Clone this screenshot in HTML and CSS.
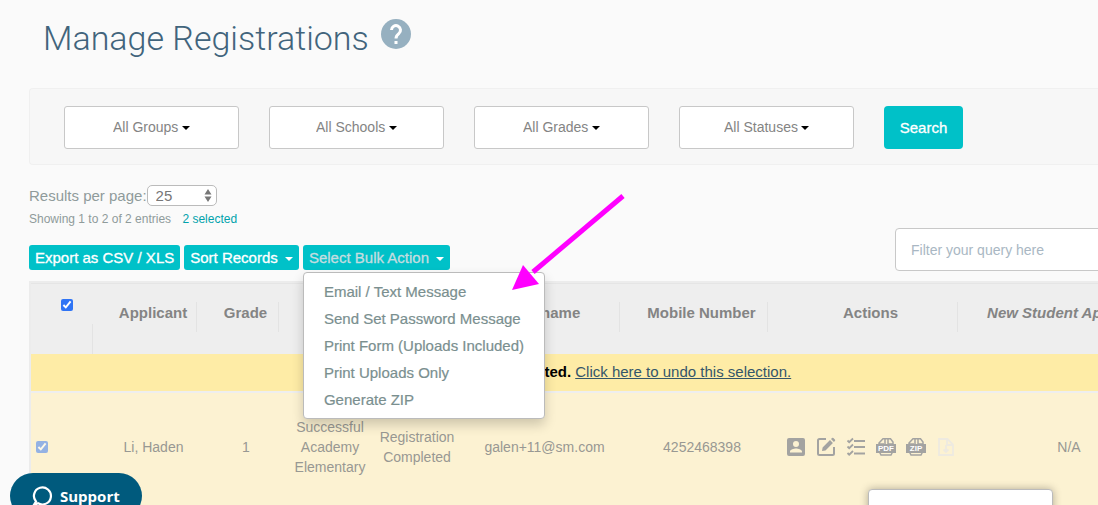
FILE: index.html
```
<!DOCTYPE html>
<html lang="en">
<head>
  <meta charset="UTF-8">
  <meta name="viewport" content="width=device-width, initial-scale=1">
  <title>Manage Registrations</title>
  <link rel="stylesheet" href="styles.css">
</head>
<body>

  <main class="page">
    <header class="title">
      <h1>Manage Registrations</h1>
      <a href="#" class="help" aria-label="Help">
        <svg width="30" height="30" viewBox="0 0 30 30">
          <circle cx="15" cy="15" r="15" fill="#96b0c0"/>
          <path d="M10.500 11a4.500 4.500 0 1 1 7.300 3.600c-1.900 1.500-2.800 2.400-2.800 5" fill="none" stroke="#fff" stroke-width="3"/>
          <rect x="13.500" y="22" width="3" height="3" fill="#fff"/>
        </svg>
      </a>
    </header>

    <form class="filters">
      <div class="filter">
        <select aria-label="Groups"><option>All Groups</option></select>
        <span class="caret"></span>
      </div>
      <div class="filter">
        <select aria-label="Schools"><option>All Schools</option></select>
        <span class="caret"></span>
      </div>
      <div class="filter">
        <select aria-label="Grades"><option>All Grades</option></select>
        <span class="caret"></span>
      </div>
      <div class="filter">
        <select aria-label="Statuses"><option>All Statuses</option></select>
        <span class="caret"></span>
      </div>
      <button type="button" class="search">Search</button>
    </form>

    <div class="per-page">
      <label for="perPage">Results per page:</label>
      <div class="stepper">
        <select id="perPage"><option>25</option></select>
        <svg width="8" height="13" viewBox="0 0 8 13"><path d="M4 0L7.500 5.500H.5zM4 13L.5 7.500H7.500z" fill="#777"/></svg>
      </div>
    </div>
    <p class="summary">Showing 1 to 2 of 2 entries <a href="#">2 selected</a></p>

    <div class="toolbar">
      <button type="button" class="btn">Export as CSV / XLS</button>
      <button type="button" class="btn">Sort Records <span class="caret"></span></button>
      <div class="dropdown">
        <button type="button" class="btn open" aria-haspopup="true" aria-expanded="true">Select Bulk Action <span class="caret"></span></button>
        <ul class="menu">
          <li><a href="#">Email / Text Message</a></li>
          <li><a href="#">Send Set Password Message</a></li>
          <li><a href="#">Print Form (Uploads Included)</a></li>
          <li><a href="#">Print Uploads Only</a></li>
          <li><a href="#">Generate ZIP</a></li>
        </ul>
      </div>
      <input type="text" class="query" placeholder="Filter your query here" aria-label="Filter your query here">
    </div>

    <div class="table-wrap">
      <table>
        <colgroup>
          <col class="c-check"><col class="c-name"><col class="c-grade"><col class="c-school"><col class="c-status">
          <col class="c-user"><col class="c-mobile"><col class="c-actions"><col class="c-new">
        </colgroup>
        <thead>
          <tr>
            <th class="check"><div><input type="checkbox" checked aria-label="Select all"></div></th>
            <th><div>Applicant</div></th>
            <th><div>Grade</div></th>
            <th aria-label="School"><div></div></th>
            <th aria-label="Status"><div></div></th>
            <th><div>Username</div></th>
            <th><div>Mobile Number</div></th>
            <th><div>Actions</div></th>
            <th><div><em>New Student Applicant</em></div></th>
          </tr>
        </thead>
        <tbody>
          <tr class="notice">
            <td colspan="9"><b>All 2 records selected.</b> <a href="#">Click here to undo this selection.</a></td>
          </tr>
          <tr class="record">
            <td class="check"><input type="checkbox" checked aria-label="Select Li, Haden"></td>
            <td>Li, Haden</td>
            <td>1</td>
            <td>Successful Academy Elementary</td>
            <td>Registration Completed</td>
            <td>galen+11@sm.com</td>
            <td>4252468398</td>
            <td>
              <div class="actions">
                <a href="#" aria-label="Profile">
                  <svg width="20" height="20" viewBox="0 0 20 20"><path fill="#a3a3a1" fill-rule="evenodd" d="M3 1h14a2 2 0 0 1 2 2v14a2 2 0 0 1-2 2H3a2 2 0 0 1-2-2V3a2 2 0 0 1 2-2zM10 4a3 3 0 1 0 0 6 3 3 0 0 0 0-6zM4 15.500h12v-1c0-2-4-3-6-3s-6 1-6 3z"/></svg>
                </a>
                <a href="#" aria-label="Edit">
                  <svg width="20" height="20" viewBox="0 0 20 20"><path d="M10 2H3.500A1.500 1.500 0 0 0 2 3.500v13A1.500 1.500 0 0 0 3.500 18h13a1.500 1.500 0 0 0 1.500-1.500V10" fill="none" stroke="#a3a3a1" stroke-width="2"/><path d="M6 14l.6-3.500 7.400-7.400 2.900 2.900-7.400 7.400zM15 2.100l1-1a1 1 0 0 1 1.400 0L18.900 2.600a1 1 0 0 1 0 1.400l-1 1z" fill="#a3a3a1"/></svg>
                </a>
                <a href="#" aria-label="Checklist">
                  <svg width="20" height="20" viewBox="0 0 20 20"><path d="M8 4h11M8 10h11M8 16.500h11" stroke="#a3a3a1" stroke-width="2"/><path d="M1.500 3.500l1.700 1.700L7 1.500M1.500 9.500l1.700 1.700L7 7.500M1.500 16l1.700 1.700L7 14" fill="none" stroke="#a3a3a1" stroke-width="1.800"/></svg>
                </a>
                <a href="#" aria-label="PDF">
                  <svg width="20" height="20" viewBox="0 0 20 20"><path d="M3 8V6l4-4.200h7.500L17 5v3M3 14l2 4h10l2-4M9 2v6M3 7h5M12 2v5h5" fill="none" stroke="#a3a3a1" stroke-width="1.500"/><path d="M0 7h20v9H0z" fill="#a3a3a1"/><text x="10" y="14" class="tag">PDF</text></svg>
                </a>
                <a href="#" aria-label="ZIP">
                  <svg width="20" height="20" viewBox="0 0 20 20"><path d="M3 8V6l4-4.200h7.500L17 5v3M3 14l2 4h10l2-4M9 2v6M3 7h5M12 2v5h5" fill="none" stroke="#a3a3a1" stroke-width="1.500"/><path d="M0 7h20v9H0z" fill="#a3a3a1"/><text x="10" y="14" class="tag">ZIP</text></svg>
                </a>
                <a href="#" aria-label="Download">
                  <svg width="20" height="20" viewBox="0 0 20 20"><path d="M3 2h8.500L17 7.500V18H3zM11 2v6h6M10 8v7M7.500 12.500L10 15l2.500-2.500" fill="none" stroke="#eeeae0" stroke-width="1.800"/></svg>
                </a>
              </div>
            </td>
            <td>N/A</td>
          </tr>
        </tbody>
      </table>
    </div>
  </main>

  <svg class="arrow" width="114" height="98" viewBox="0 0 114 98">
    <path d="M112 2L22 78" stroke="#f0f" stroke-width="5"/>
    <path d="M1 96L12 71L28 90z" fill="#f0f"/>
  </svg>

  <button type="button" class="support">
    <svg width="22" height="22" viewBox="0 0 22 22"><path d="M7 18.200L2.500 20.500 5 16.500A8.500 8.500 0 1 1 7 18.200z" fill="none" stroke="#fff" stroke-width="2.200"/></svg>
    Support
  </button>
  <div class="popup"></div>

</body>
</html>
```
FILE: styles.css
```
*{box-sizing: border-box;}
body{
  margin: 0;
  overflow: hidden;
  background-color: #fafafa;
  color: #8f9b9b;
  font: 15px/20px "Liberation Sans", Arial, sans-serif;
}
button, select, input{
  font: inherit;
  color: inherit;
}
select{
  appearance: none;
  border: 0;
  padding: 0;
  background: none;
}
.page{padding-left: 29px;}

/* title */
.title{
  display: flex;
  gap: 12px;
  padding: 17px 0 0 14px;
  height: 88px;
}
.title h1{
  margin: 0;
  color: #41647c;
  font: 300 34px/42px Roboto, sans-serif;
}
.help{
  height: 30px;
  margin-top: 2px;
}

/* filters */
.filters{
  display: flex;
  gap: 30px;
  height: 77px;
  padding: 17px 34px;
  border: 1px solid #f0f0f0;
  border-right: 0;
  border-radius: 4px 0 0 4px;
  background-color: #f7f7f7;
}
.filter{
  display: flex;
  align-items: center;
  justify-content: center;
  gap: 3px;
  width: 175px;
  height: 43px;
  border: 1px solid #c8c8c8;
  border-radius: 3px;
  background-color: #fff;
  color: #848484;
  font-size: 14px;
}
.filter select{margin-bottom: 1px;}
.caret{
  display: inline-block;
  border: 4px solid transparent;
  border-top-color: currentColor;
  border-bottom: 0;
}
.filter .caret{color: #000;}
.search{
  width: 79px;
  height: 43px;
  padding: 0;
  border: 0;
  border-radius: 4px;
  background-color: #00c1c8;
  color: #fff;
  -webkit-text-stroke: 0.3px #fff;
}

/* results info */
.per-page{
  display: flex;
  align-items: center;
  margin-top: 20px;
}
.stepper{
  display: flex;
  align-items: center;
  justify-content: space-between;
  width: 70px;
  height: 21px;
  padding: 0 4px 0 8px;
  border: 1px solid #bbb;
  border-radius: 5px;
  background-color: #fff;
  color: #777;
}
.summary{
  margin: 4px 0 0;
  font-size: 12px;
  line-height: 18px;
}
.summary a{
  margin-left: 8px;
  color: #00a2ac;
  text-decoration: none;
}

/* toolbar */
.toolbar{
  display: flex;
  align-items: flex-end;
  gap: 4px;
  height: 43px;
  margin-bottom: 10px;
}
.btn{
  height: 25px;
  margin-bottom: 1px;
  padding: 0 6px;
  border: 0;
  border-radius: 3px;
  background-color: #00c1c8;
  color: #fff;
  white-space: nowrap;
  -webkit-text-stroke: 0.3px currentColor;
}
.btn .caret{
  margin-left: 3px;
  vertical-align: 2px;
}
.btn.open{color: #c5dde0;}
.btn.open .caret{color: #fff;}
.dropdown{position: relative;}
.menu{
  position: absolute;
  z-index: 2;
  top: 27px;
  left: 0;
  width: 242px;
  margin: 0;
  padding: 5px 0;
  border: 1px solid #bbb;
  border-radius: 4px;
  background-color: #fff;
  box-shadow: 0 6px 12px rgba(0,0,0,.18);
  list-style: none;
}
.menu a{
  display: block;
  padding: 0 20px;
  color: #7a8f8f;
  line-height: 27px;
  text-decoration: none;
  white-space: nowrap;
  -webkit-text-stroke: 0.2px currentColor;
}
.query{
  width: 230px;
  height: 43px;
  margin: 0 -27px 0 auto;
  padding: 0 15px;
  border: 1px solid #c8c8c8;
  border-radius: 4px;
  background-color: #fff;
  font-size: 14px;
}
.query::placeholder{color: #a9b7c3;}

/* table */
.table-wrap{
  overflow: hidden;
  border: solid #ececec;
  border-width: 2px 0 0 2px;
}
table{
  width: 1141px;
  table-layout: fixed;
  border-collapse: collapse;
  text-align: center;
}
.c-check{width: 71px;}
.c-name{width: 103px;}
.c-grade{width: 82px;}
.c-school{width: 86px;}
.c-status{width: 88px;}
.c-user{width: 167px;}
.c-mobile{width: 148px;}
.c-actions{width: 190px;}
.c-new{width: 206px;}
th, td{padding: 0;}
thead tr{
  height: 70px;
  border-top: 1px solid #e5e5e5;
  background-color: #eee;
}
th{
  padding: 0 8px;
  color: #848484;
  vertical-align: top;
  white-space: nowrap;
}
th div{
  height: 30px;
  margin-top: 18px;
  border-right: 1px solid #e3e3e3;
  line-height: 22px;
}
/* the divider of the first column hangs lower than the others */
th.check{
  padding: 0 10px;
  background: linear-gradient(#e3e3e3, #e3e3e3) no-repeat 61px 100% / 1px 30px;
}
th.check div{
  border: 0;
  line-height: 0;
}
input[type=checkbox]{
  width: 12px;
  height: 12px;
  margin: 0;
  accent-color: #2f74f5;
}
th.check input{margin-top: -3px;}
.notice{
  height: 38px;
  border-bottom: 2px solid #eee;
  background-color: #feeca6;
}
.notice b{color: #000;}
.notice a{color: #34566a;}
.record{
  height: 113px;
  background-color: #fcf2d2;
  color: #989893;
  font-size: 14px;
}
.record td{padding-bottom: 4px;}
.record .check{
  padding-left: 5px;
  text-align: left;
}
.record .check input{
  display: block;
  opacity: .5;
}
.actions{
  display: flex;
  justify-content: center;
  gap: 10px;
}
.actions svg{display: block;}
.tag{
  fill: #fff;
  font: bold 8px "Liberation Sans", sans-serif;
  text-anchor: middle;
}

/* things floating over the page */
.arrow{
  position: absolute;
  z-index: 3;
  top: 194px;
  left: 511px;
}
.support{
  position: fixed;
  bottom: -14px;
  left: 10px;
  display: flex;
  align-items: center;
  gap: 7px;
  height: 46px;
  padding: 0 22px 0 21px;
  border: 0;
  border-radius: 23px;
  background-color: #005a7d;
  color: #fff;
  font: bold 15px/20px "Open Sans", sans-serif;
}
.popup{
  position: fixed;
  right: 45px;
  bottom: -34px;
  width: 185px;
  height: 50px;
  border: 1px solid #bbb;
  border-radius: 4px;
  background-color: #fff;
  box-shadow: 0 0 8px rgba(0,0,0,.3);
}
```
